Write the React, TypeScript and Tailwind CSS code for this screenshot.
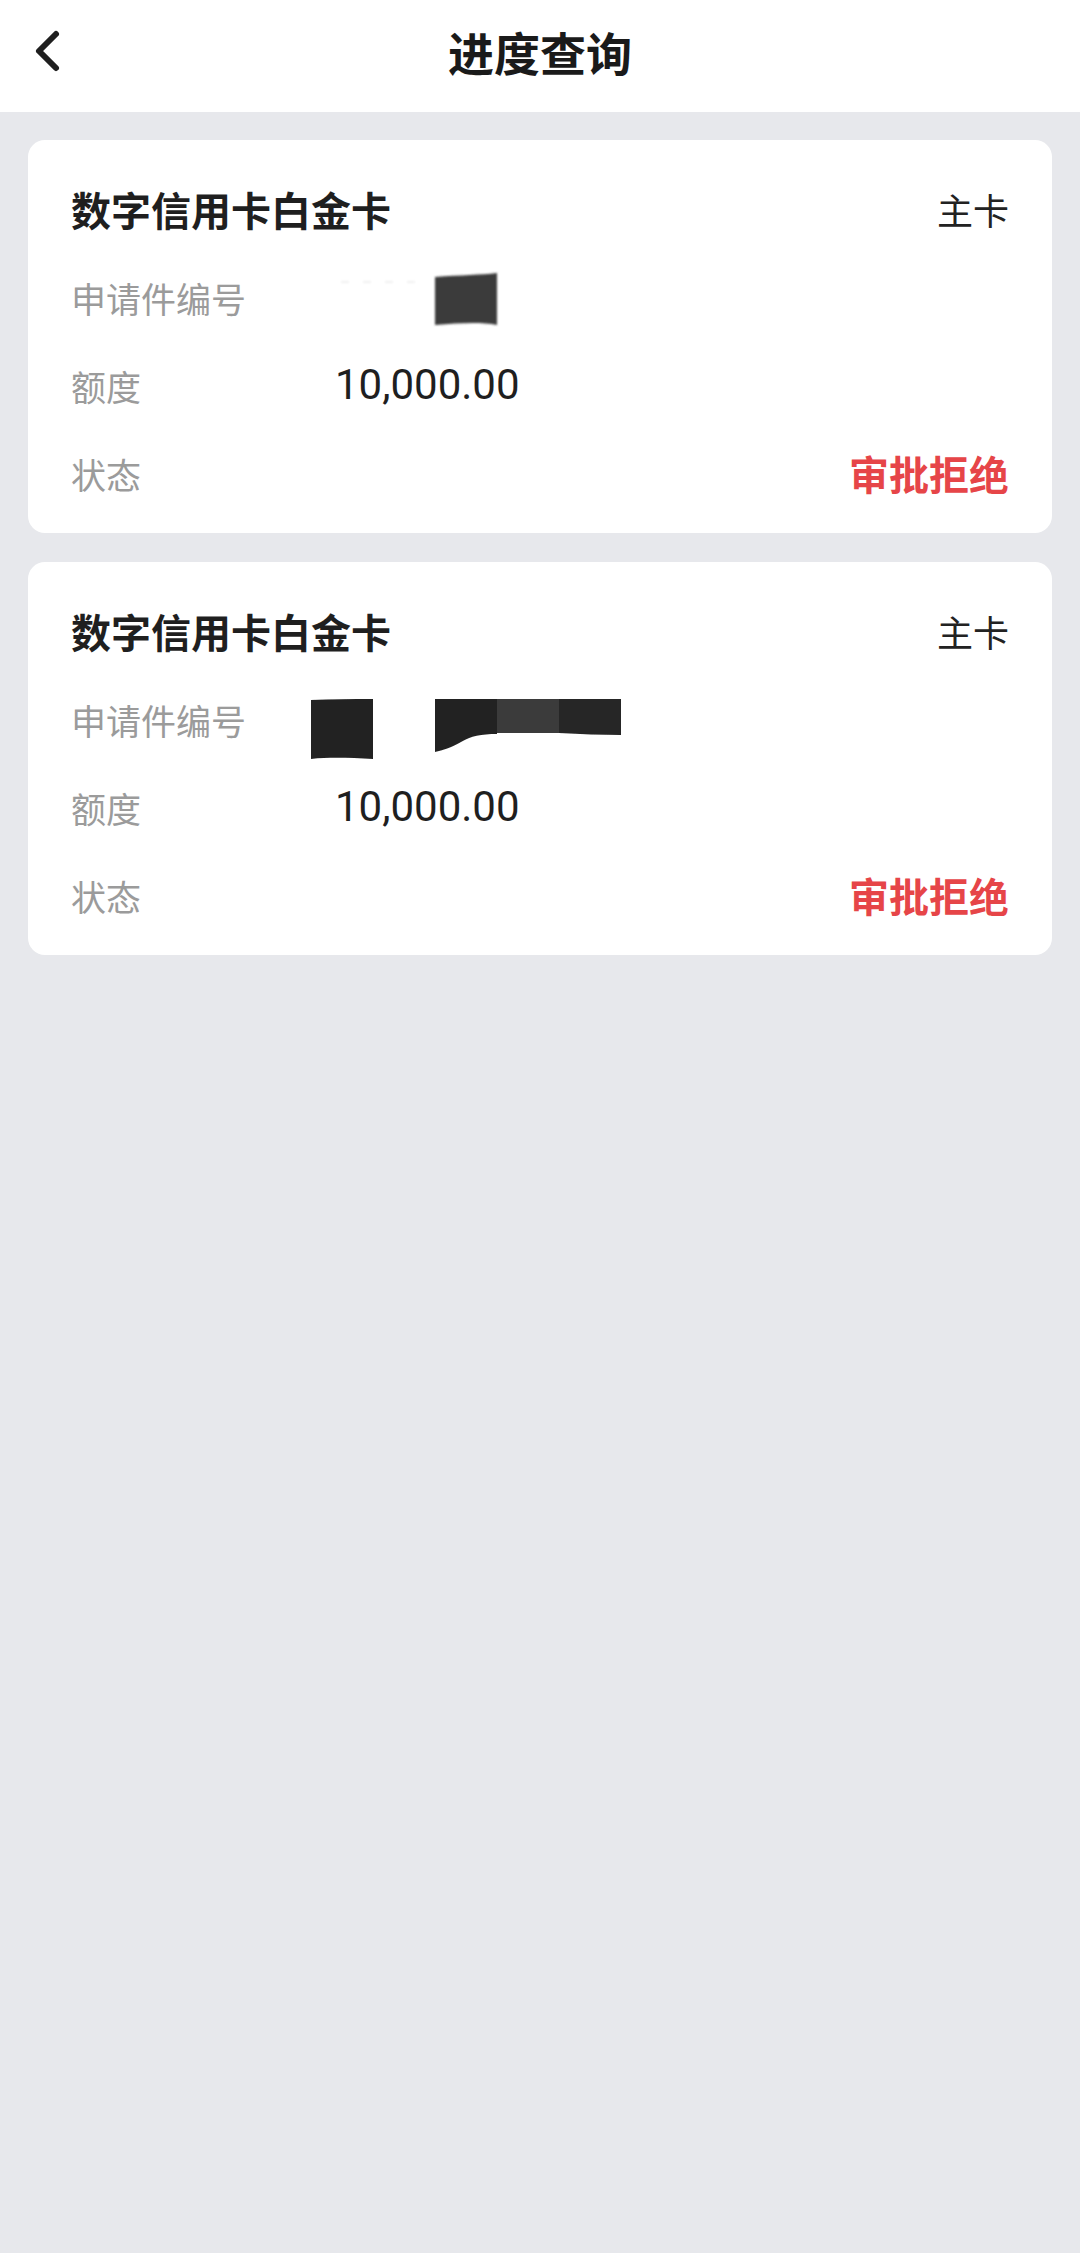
import React from "react";

const FONT = '"Noto Sans CJK SC", "Noto Sans", sans-serif';
const NUM_FONT = 'Roboto, "Noto Sans CJK SC", sans-serif';

function Redaction1() {
  return (
    <svg width="320" height="88" viewBox="0 0 320 88" className="block">
      <defs>
        <filter id="b1" x="-10%" y="-10%" width="120%" height="120%">
          <feGaussianBlur stdDeviation="0.8" />
        </filter>
      </defs>
      <g filter="url(#b1)">
        <line x1="30" y1="29" x2="113" y2="29" stroke="#ececec" strokeWidth="1.5" strokeDasharray="8 14" />
        <path d="M124 24 C150 22 170 22 186 20 V72 C170 69 150 70 124 72 Z" fill="#3b3b3b" />
      </g>
    </svg>
  );
}

function Redaction2() {
  return (
    <svg width="320" height="88" viewBox="0 0 320 88" className="block">
      <defs>
        <filter id="b2" x="-10%" y="-10%" width="120%" height="120%">
          <feGaussianBlur stdDeviation="0.7" />
        </filter>
      </defs>
      <g filter="url(#b2)">
        <path d="M0 25 C20 24 40 24 62 24 V84 C40 83 20 82 0 84 Z" fill="#232323" />
        <path d="M124 24 H186 V59 C170 59 160 61 150 67 C140 73 132 75 124 77 Z" fill="#232323" />
        <rect x="186" y="24" width="62" height="34" fill="#3a3a3a" />
        <path d="M248 24 H310 V60 C290 60 270 59 248 58 Z" fill="#252525" />
      </g>
    </svg>
  );
}

function Card({ redaction }: { redaction: React.ReactNode }) {
  return (
    <div className="mx-[28px] rounded-[17px] bg-white pl-[43px] pr-[43px] pt-[25px] pb-[16px]">
      <div className="flex h-[88px] items-center justify-between">
        <span className="text-[40px] font-bold text-[#1f1f1f] leading-none" style={{ fontFamily: FONT }}>
          数字信用卡白金卡
        </span>
        <span className="text-[36px] text-[#222222] leading-none" style={{ fontFamily: FONT }}>
          主卡
        </span>
      </div>
      <div className="flex h-[88px] items-center">
        <span className="w-[240px] shrink-0 text-[35px] text-[#9b9b9b] leading-none" style={{ fontFamily: FONT }}>
          申请件编号
        </span>
        {redaction}
      </div>
      <div className="flex h-[88px] items-center">
        <span className="w-[240px] shrink-0 text-[35px] text-[#9b9b9b] leading-none" style={{ fontFamily: FONT }}>
          额度
        </span>
        <span className="pl-[24px] text-[42px] text-[#1f1f1f] leading-none" style={{ fontFamily: NUM_FONT }}>
          10,000.00
        </span>
      </div>
      <div className="flex h-[88px] items-center justify-between">
        <span className="w-[240px] shrink-0 text-[35px] text-[#9b9b9b] leading-none" style={{ fontFamily: FONT }}>
          状态
        </span>
        <span className="text-[40px] font-bold text-[#e64548] leading-none" style={{ fontFamily: FONT }}>
          审批拒绝
        </span>
      </div>
    </div>
  );
}

export default function App() {
  return (
    <div className="min-h-screen bg-[#e7e8ec]" style={{ fontFamily: FONT }}>
      <header className="relative flex h-[112px] items-center justify-center bg-white">
        <button className="absolute left-[26px] top-[28px] flex h-[46px] w-[40px] items-center justify-center">
          <svg width="32" height="44" viewBox="0 0 32 44" fill="none">
            <polyline
              points="26,5 9,22 26,39"
              stroke="#1f1f1f"
              strokeWidth="6"
              strokeLinecap="round"
              strokeLinejoin="round"
            />
          </svg>
        </button>
        <h1 className="text-[46px] font-bold text-[#1a1a1a] leading-none -mt-[10px]">进度查询</h1>
      </header>
      <div className="flex flex-col gap-[29px] pt-[28px]">
        <Card redaction={<Redaction1 />} />
        <Card redaction={<Redaction2 />} />
      </div>
    </div>
  );
}
